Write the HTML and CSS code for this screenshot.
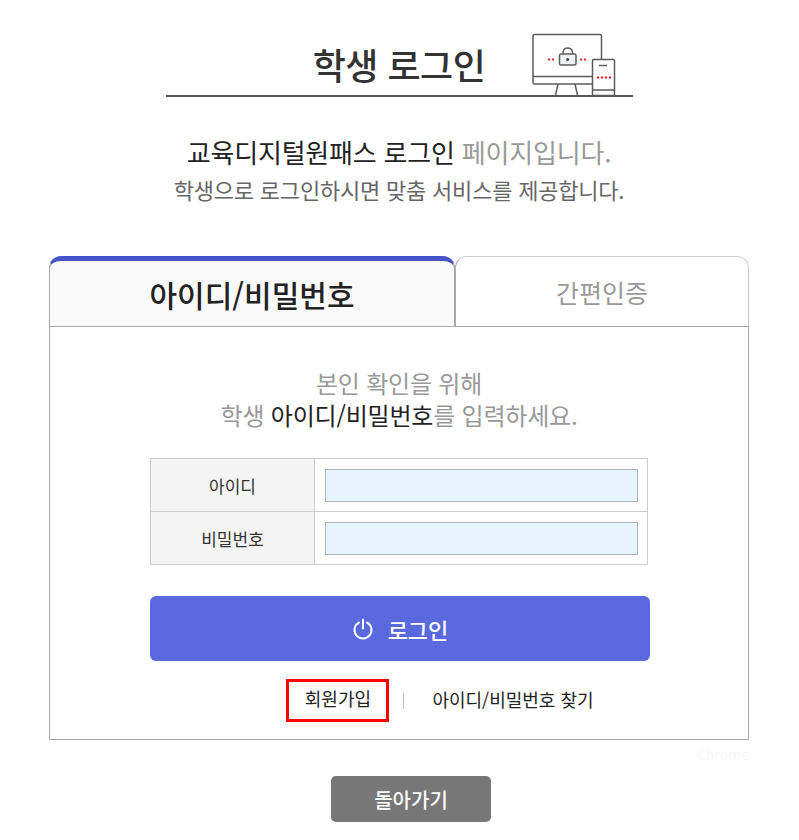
FILE: index.html
```html
<!DOCTYPE html>
<html lang="ko">
<head>
  <meta charset="UTF-8" />
  <title>학생 로그인</title>
  <link rel="stylesheet" href="styles.css">
</head>
<body>
  <div class="wrap">
    <div class="title-box">
      <h1>학생 로그인</h1>
      <svg class="title-icon" width="100" height="64" viewBox="0 0 100 64" fill="none" stroke="#5c5c5c" stroke-width="1.500">
        <rect x="1" y="1.500" width="68.500" height="49.500" rx="1.500"/>
        <path d="M1 43.500h68"/>
        <path d="M26 51l-2.500 11M43 51l2.500 11"/>
        <rect x="60.500" y="26.500" width="22" height="36" rx="1" fill="#fff"/>
        <path d="M60.500 57h22M67 32.500h8"/>
        <rect x="27.500" y="21" width="16.500" height="11" rx="1.500" fill="#f1f3f6"/>
        <path d="M31 21v-2a4.800 4.800 0 0 1 9.500 0v2"/>
        <circle cx="35.700" cy="26.500" r="1.500" fill="#444" stroke="none"/>
        <g fill="#e23b41" stroke="none">
          <circle cx="17" cy="26.500" r="1.200"/><circle cx="21" cy="26.500" r="1.200"/>
          <circle cx="49" cy="26.500" r="1.200"/><circle cx="53" cy="26.500" r="1.200"/>
          <circle cx="66" cy="44.500" r="1.300"/><circle cx="70" cy="44.500" r="1.300"/><circle cx="74" cy="44.500" r="1.300"/><circle cx="78" cy="44.500" r="1.300"/>
        </g>
      </svg>
    </div>

    <div class="intro">
      <p class="intro-main"><span class="dark">교육디지털원패스 로그인</span> 페이지입니다.</p>
      <p class="intro-sub">학생으로 로그인하시면 맞춤 서비스를 제공합니다.</p>
    </div>

    <div class="tabs">
      <div class="tab tab-on">아이디/비밀번호</div>
      <div class="tab tab-off">간편인증</div>
    </div>

    <div class="panel">
      <p class="guide">본인 확인을 위해<br>학생 <span class="dark">아이디/비밀번호</span>를 입력하세요.</p>

      <table class="login-table">
        <tr>
          <th>아이디</th>
          <td><input type="text" class="login-input"></td>
        </tr>
        <tr>
          <th>비밀번호</th>
          <td><input type="password" class="login-input"></td>
        </tr>
      </table>

      <button class="login-btn">
        <svg width="22" height="22" viewBox="0 0 22 22" fill="none" stroke="#fff" stroke-width="2" stroke-linecap="round">
          <path d="M7 4.500a8.500 8.500 0 1 0 8 0"/>
          <path d="M11 1.500v9"/>
        </svg>
        로그인
      </button>

      <div class="links">
        <a class="link link-join">회원가입</a>
        <span class="link-bar"></span>
        <a class="link link-find">아이디/비밀번호 찾기</a>
      </div>
    </div>

    <div class="chrome-note">Chrome</div>

    <div class="back-row">
      <button class="back-btn">돌아가기</button>
    </div>
  </div>
</body>
</html>
```

FILE: styles.css
```css
* {
  box-sizing: border-box;
}
body {
  margin: 0;
  background: #fff;
  color: #777;
  font-family: "Noto Sans CJK KR", "Noto Sans", sans-serif;
}
p {
  margin: 0;
}
.wrap {
  width: 700px;
  margin-left: 49px;
  padding-top: 33px;
}
.dark {
  color: #222;
}
.title-box {
  display: flex;
  justify-content: center;
  position: relative;
  width: 467px;
  height: 64px;
  margin: 0 auto;
  border-bottom: 2px solid #555;
}
.title-box h1 {
  margin: 0;
  font-size: 36px;
  font-weight: 500;
  line-height: 62px;
  color: #333;
  letter-spacing: -0.5px;
}
.title-icon {
  position: absolute;
  left: 366px;
  top: 0;
}
.intro {
  margin-top: 36px;
  text-align: center;
}
.intro-main {
  font-size: 26px;
  line-height: 38px;
  letter-spacing: -0.2px;
  color: #999;
}
.intro-sub {
  font-size: 22px;
  line-height: 36px;
  letter-spacing: -0.2px;
  color: #666;
}
.tabs {
  display: flex;
  margin-top: 49px;
  height: 70px;
}
.tab {
  display: flex;
  align-items: center;
  justify-content: center;
  border-radius: 12px 12px 0 0;
}
.tab-on {
  width: 406px;
  background: #fafafa;
  border: 1px solid #aaa;
  border-top: 5px solid #4654c8;
  border-bottom: 0;
  color: #222;
  font-size: 30px;
  font-weight: 500;
}
.tab-off {
  flex: 1;
  border: 1px solid #ccc;
  border-bottom: 0;
  border-left-color: #aaa;
  color: #999;
  font-size: 25px;
}
.panel {
  height: 414px;
  padding-top: 40px;
  border: 1px solid #aaa;
  text-align: center;
}
.guide {
  font-size: 24px;
  line-height: 32px;
  letter-spacing: -0.2px;
  color: #999;
}
.login-table {
  width: 498px;
  margin: 27px auto 0;
  border-collapse: collapse;
}
.login-table th,
.login-table td {
  height: 53px;
  padding: 0;
  border: 1px solid #ccc;
}
.login-table th {
  width: 164px;
  background: #f4f4f4;
  color: #333;
  font-size: 17px;
  font-weight: 400;
}
.login-table td {
  padding: 0 9px 0 10px;
}
.login-input {
  display: block;
  width: 100%;
  height: 33px;
  background: #e8f4fd;
  border: 1px solid #aeb4bc;
}
.login-btn {
  display: flex;
  align-items: center;
  justify-content: center;
  gap: 14px;
  width: 500px;
  height: 65px;
  margin: 31px 0 0 100px;
  background: #5a69de;
  border: none;
  border-radius: 6px;
  color: #fff;
  font-family: inherit;
  font-size: 22px;
  font-weight: 500;
}
.links {
  display: flex;
  align-items: center;
  justify-content: center;
  margin-top: 18px;
  padding-left: 82px;
  color: #222;
  font-size: 18px;
}
.link-join {
  width: 103px;
  height: 43px;
  line-height: 32px;
  border: 3px solid #f00;
}
.link-find {
  margin-bottom: 4px;
}
.link-bar {
  width: 1px;
  height: 16px;
  margin: 0 28px 0 14px;
  background: #bbb;
}
.chrome-note {
  margin-top: 3px;
  height: 22px;
  text-align: right;
  color: #f8f7fe;
  font-size: 14px;
  line-height: 22px;
}
.back-row {
  display: flex;
  justify-content: center;
  margin-top: 11px;
  padding-left: 24px;
}
.back-btn {
  width: 160px;
  height: 46px;
  background: #777;
  border: none;
  border-radius: 5px;
  color: #fff;
  font-family: inherit;
  font-size: 20px;
  font-weight: 500;
}
```
